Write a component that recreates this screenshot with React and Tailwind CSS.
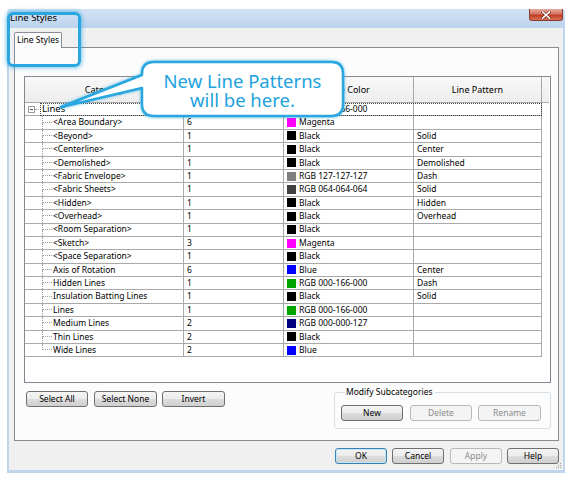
import React from 'react';

const rows = [
  { n: '<Area Boundary>', w: '6', c: 'Magenta', s: 'bg-[#ff00ff]', p: '' },
  { n: '<Beyond>', w: '1', c: 'Black', s: 'bg-black', p: 'Solid' },
  { n: '<Centerline>', w: '1', c: 'Black', s: 'bg-black', p: 'Center' },
  { n: '<Demolished>', w: '1', c: 'Black', s: 'bg-black', p: 'Demolished' },
  { n: '<Fabric Envelope>', w: '1', c: 'RGB 127-127-127', s: 'bg-[#7f7f7f]', p: 'Dash' },
  { n: '<Fabric Sheets>', w: '1', c: 'RGB 064-064-064', s: 'bg-[#404040]', p: 'Solid' },
  { n: '<Hidden>', w: '1', c: 'Black', s: 'bg-black', p: 'Hidden' },
  { n: '<Overhead>', w: '1', c: 'Black', s: 'bg-black', p: 'Overhead' },
  { n: '<Room Separation>', w: '1', c: 'Black', s: 'bg-black', p: '' },
  { n: '<Sketch>', w: '3', c: 'Magenta', s: 'bg-[#ff00ff]', p: '' },
  { n: '<Space Separation>', w: '1', c: 'Black', s: 'bg-black', p: '' },
  { n: 'Axis of Rotation', w: '6', c: 'Blue', s: 'bg-[#0000ff]', p: 'Center' },
  { n: 'Hidden Lines', w: '1', c: 'RGB 000-166-000', s: 'bg-[#00a600]', p: 'Dash' },
  { n: 'Insulation Batting Lines', w: '1', c: 'Black', s: 'bg-black', p: 'Solid' },
  { n: 'Lines', w: '1', c: 'RGB 000-166-000', s: 'bg-[#00a600]', p: '' },
  { n: 'Medium Lines', w: '2', c: 'RGB 000-000-127', s: 'bg-[#00007f]', p: '' },
  { n: 'Thin Lines', w: '2', c: 'Black', s: 'bg-black', p: '' },
  { n: 'Wide Lines', w: '2', c: 'Blue', s: 'bg-[#0000ff]', p: '' },
];

function Btn({ className, kind, children }) {
  let look =
    'border-[#707070] bg-[linear-gradient(#f4f4f4,#ebebeb_50%,#dddddd_50%,#cfcfcf)] text-black';
  if (kind === 'disabled') look = 'border-[#b5b9bc] bg-[#f4f4f4] text-[#8d8d8d]';
  if (kind === 'default')
    look =
      'border-[#3c7fb1] bg-[linear-gradient(#f4f4f4,#ebebeb_50%,#dddddd_50%,#cfcfcf)] text-black shadow-[inset_0_0_0_1px_#bfe3f7]';
  return (
    <div
      className={
        'h-[16px] shrink-0 flex items-center justify-center rounded-[3px] border text-[8.5px] leading-none ' +
        look +
        ' ' +
        className
      }
    >
      {children}
    </div>
  );
}

function Swatch({ s }) {
  return <span className={'w-[9px] h-[9px] shrink-0 ' + s} />;
}

function Row({ r, last }) {
  return (
    <div className="flex h-[13.4px] w-[517px] shrink-0 border-b border-[#a9a9a9] text-[8.5px] leading-none">
      <div className="w-[159px] shrink-0 border-r border-[#a9a9a9] flex items-stretch">
        <div className="ml-[17px] w-[10px] shrink-0 flex flex-col">
          <div className="h-1/2 border-l border-b border-dotted border-[#a0a0a0]" />
          <div className={'h-1/2 border-dotted border-[#a0a0a0] ' + (last ? '' : 'border-l')} />
        </div>
        <span className="self-center ml-[1px] whitespace-nowrap">{r.n}</span>
      </div>
      <div className="w-[100px] shrink-0 border-r border-[#a9a9a9] flex items-center pl-[3px]">{r.w}</div>
      <div className="w-[130px] shrink-0 border-r border-[#a9a9a9] flex items-center pl-[3px] gap-[3px] whitespace-nowrap">
        <Swatch s={r.s} />
        <span>{r.c}</span>
      </div>
      <div className="w-[128px] shrink-0 border-r border-[#a9a9a9] flex items-center pl-[3px]">{r.p}</div>
    </div>
  );
}

export default function App() {
  return (
    <div className="relative w-[571px] h-[481px] overflow-hidden bg-white pl-[7px] pt-[9px] font-['Noto_Sans',sans-serif] text-black">
      {/* Window */}
      <div className="w-[558px] h-[464px] flex flex-col rounded-t-[4px] bg-[#c0d5ee]">
        {/* Title bar */}
        <div className="h-[19px] shrink-0 flex items-start rounded-t-[4px] bg-[linear-gradient(#d2e2f5,#bcd3ed)]">
          <span className="pl-[3px] pt-[3px] text-[9.5px] leading-[12px]">Line Styles</span>
          <div className="ml-auto mr-[2px] w-[34px] h-[12px] rounded-b-[3px] border border-t-0 border-[#8b3b2e] bg-[linear-gradient(#e9a99b,#d47563_45%,#c23a22_55%,#d8735a)] flex items-center justify-center">
            <svg width="10" height="8" viewBox="0 0 10 8">
              <path d="M1.5 0.8 L8.5 7.2 M8.5 0.8 L1.5 7.2" stroke="#5a1b10" strokeWidth="2.6" strokeLinecap="square" />
              <path d="M1.5 0.8 L8.5 7.2 M8.5 0.8 L1.5 7.2" stroke="#ffffff" strokeWidth="1.6" strokeLinecap="square" />
            </svg>
          </div>
        </div>

        {/* Body */}
        <div className="flex-1 mx-[2px] mb-[3px] bg-[#f0f0f0] flex flex-col pt-[4px] relative">
          {/* Tab strip */}
          <div className="pl-[5px] flex shrink-0">
            <div className="relative z-[1] -mb-px w-[48px] h-[16px] border border-b-0 border-[#898c95] bg-[#fcfcfc] rounded-t-[2px] text-[8.5px] leading-none flex items-center justify-center">
              Line Styles
            </div>
          </div>

          {/* Tab panel */}
          <div className="ml-[5px] w-[545px] h-[394px] shrink-0 border border-[#898c95] bg-[#fcfcfc] flex flex-col">
            {/* Table */}
            <div className="mt-[28px] ml-[9px] w-[527px] h-[307px] shrink-0 border border-[#828790] bg-white flex flex-col overflow-hidden">
              <div className="flex h-[26px] w-[524px] shrink-0 border-b border-[#a9a9a9] bg-[linear-gradient(#f8f8f8,#ededed)] text-[9px] leading-none">
                <div className="w-[159px] shrink-0 border-r border-[#a9a9a9] flex items-center justify-center">Category</div>
                <div className="w-[100px] shrink-0 border-r border-[#a9a9a9] flex items-center justify-center">Line Weight</div>
                <div className="w-[130px] shrink-0 border-r border-[#a9a9a9] flex items-center justify-center">Line Color</div>
                <div className="w-[128px] shrink-0 border-r border-[#a9a9a9] flex items-center justify-center">Line Pattern</div>
                <div className="flex-1" />
              </div>

              {/* First row */}
              <div className="relative flex h-[13.4px] w-[517px] shrink-0 border-b border-[#a9a9a9] text-[8.5px] leading-none">
                <div className="w-[159px] shrink-0 border-r border-[#a9a9a9] flex items-center">
                  <span className="ml-[3px] w-[7px] h-[7px] shrink-0 border border-[#9a9a9a] bg-white flex items-center justify-center">
                    <span className="w-[3px] h-px bg-[#555]" />
                  </span>
                  <span className="w-[6px] shrink-0 border-t border-dotted border-[#a0a0a0]" />
                  <span className="ml-[1px] text-[9.5px]">Lines</span>
                </div>
                <div className="w-[100px] shrink-0 border-r border-[#a9a9a9]" />
                <div className="w-[130px] shrink-0 border-r border-[#a9a9a9] flex items-center pl-[3px] gap-[3px] whitespace-nowrap">
                  <Swatch s="bg-[#00a600]" />
                  <span>RGB 000-166-000</span>
                </div>
                <div className="w-[128px] shrink-0 border-r border-[#a9a9a9]" />
                <div className="absolute left-[15px] right-0 top-0 bottom-[-1px] border border-dotted border-[#444]" />
              </div>

              {rows.map((r, i) => (
                <Row key={i} r={r} last={i === rows.length - 1} />
              ))}
            </div>

            {/* Below table */}
            <div className="flex items-start shrink-0">
              <div className="mt-[8px] ml-[11px] flex">
                <Btn className="w-[62px]">Select All</Btn>
                <Btn className="w-[63px] ml-[6px]">Select None</Btn>
                <Btn className="w-[63px] ml-[5px]">Invert</Btn>
              </div>
              <fieldset className="ml-auto mr-[7px] mt-[3px] w-[217px] border border-[#d5dfe5] rounded-[3px] pl-[6px] pt-[7px] pb-[7px]">
                <legend className="ml-[3px] px-[2px] text-[8.5px] leading-[12px]">Modify Subcategories</legend>
                <div className="flex">
                  <Btn className="w-[62px]">New</Btn>
                  <Btn className="w-[62px] ml-[7px]" kind="disabled">Delete</Btn>
                  <Btn className="w-[63px] ml-[6px]" kind="disabled">Rename</Btn>
                </div>
              </fieldset>
            </div>
          </div>

          {/* Footer buttons */}
          <div className="mt-[7px] flex justify-end pr-[4px] shrink-0">
            <Btn className="w-[52px]" kind="default">OK</Btn>
            <Btn className="w-[52px] ml-[5px]">Cancel</Btn>
            <Btn className="w-[52px] ml-[6px]" kind="disabled">Apply</Btn>
            <Btn className="w-[52px] ml-[5px]">Help</Btn>
          </div>

          {/* resize grip */}
          <svg className="absolute right-[1px] bottom-[1px]" width="6" height="6" viewBox="0 0 6 6">
            <rect x="4" y="0" width="1" height="1" fill="#9a9a9a" />
            <rect x="2" y="2" width="1" height="1" fill="#9a9a9a" />
            <rect x="4" y="2" width="1" height="1" fill="#9a9a9a" />
            <rect x="0" y="4" width="1" height="1" fill="#9a9a9a" />
            <rect x="2" y="4" width="1" height="1" fill="#9a9a9a" />
            <rect x="4" y="4" width="1" height="1" fill="#9a9a9a" />
          </svg>
        </div>
      </div>

      {/* Highlight around the tab */}
      <div className="absolute left-[7px] top-[12px] w-[74px] h-[55px] rounded-[6px] border-[3px] border-[#2aa7df] shadow-[0_0_4px_1px_rgba(42,167,223,0.6)] pointer-events-none" />

      {/* Callout */}
      <svg className="absolute left-0 top-0 pointer-events-none" width="571" height="481" viewBox="0 0 571 481">
        <defs>
          <filter id="glow" x="-10%" y="-30%" width="120%" height="160%">
            <feDropShadow dx="0" dy="0" stdDeviation="1.6" floodColor="#2aa7df" floodOpacity="0.8" />
          </filter>
        </defs>
        <path
          d="M61 107 L142 75 L142 74 Q142 62 154 62 L331 62 Q343 62 343 74 L343 104 Q343 116 331 116 L154 116 Q142 116 142 104 L142 88 Z"
          fill="#ffffff"
          stroke="#2aa7df"
          strokeWidth="2.5"
          strokeLinejoin="round"
          filter="url(#glow)"
        />
      </svg>
      <div className="absolute left-[142px] top-[62px] w-[201px] h-[54px] pt-[1px] flex flex-col items-center justify-center text-[18.5px] leading-[19px] text-[#22a3dd] pointer-events-none">
        <span>New Line Patterns</span>
        <span>will be here.</span>
      </div>
    </div>
  );
}
